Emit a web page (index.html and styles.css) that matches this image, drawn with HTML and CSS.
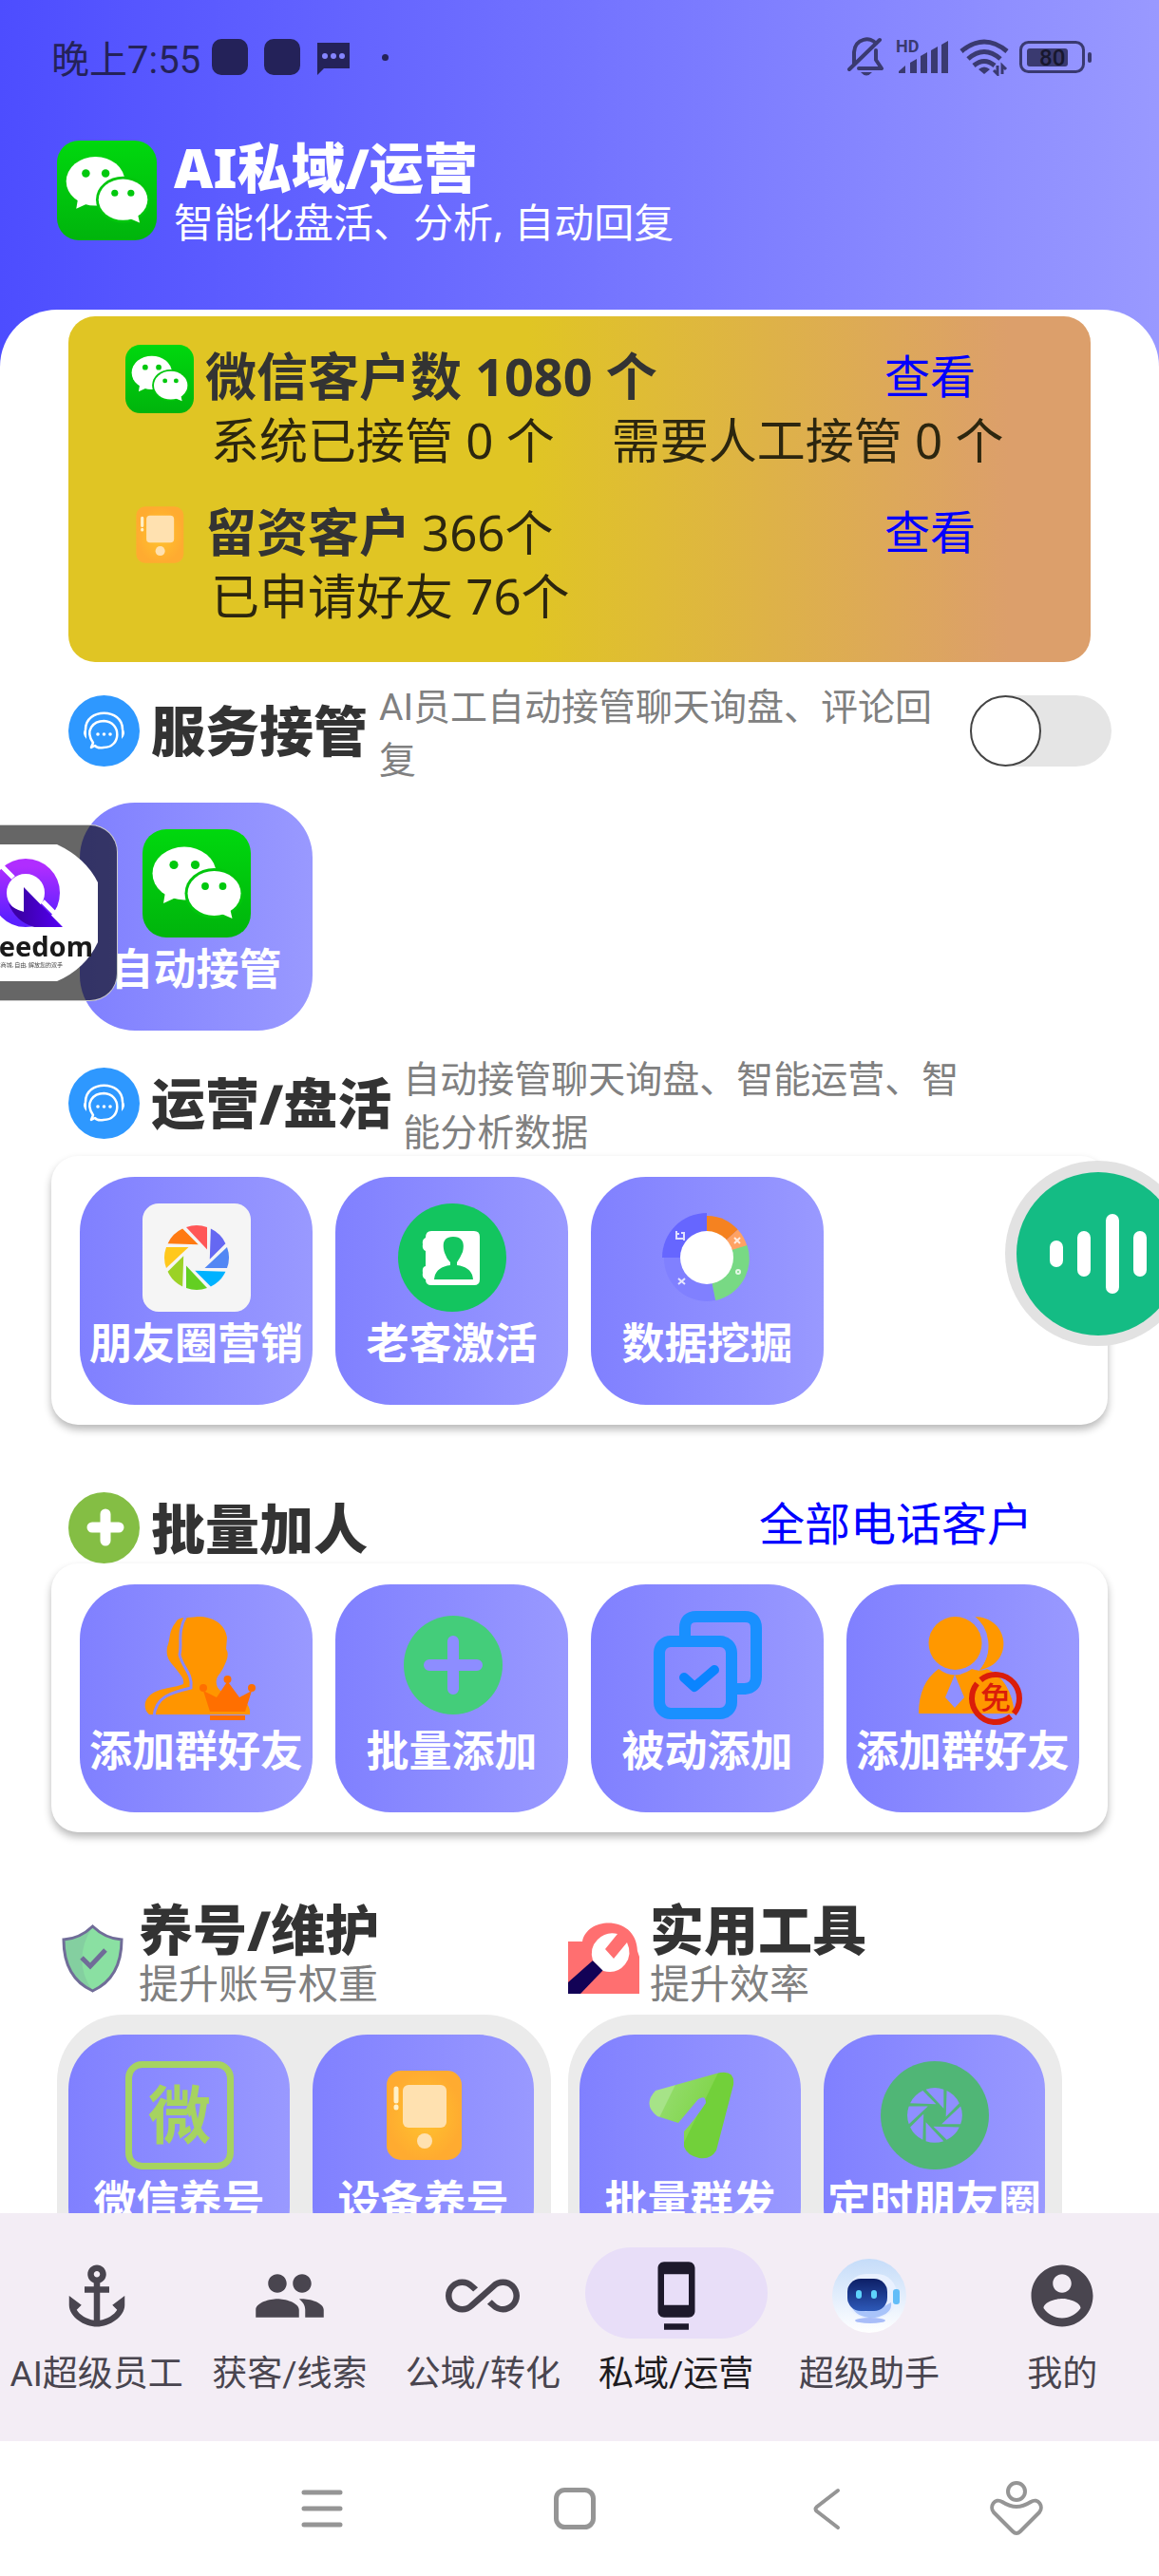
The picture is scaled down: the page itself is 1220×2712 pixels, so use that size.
FILE: index.html
```html
<!DOCTYPE html>
<html lang="zh-CN">
<head>
    <meta charset="UTF-8">
    <meta name="viewport" content="width=device-width, initial-scale=1.0">
    <title>AI私域/运营</title>
    <link rel="stylesheet" href="styles.css">
</head>
<body>

    <!-- Shared icons -->
    <svg class="sprite" aria-hidden="true">
        <defs>
            <linearGradient id="wechatGreen" x1="0" y1="0" x2="0" y2="1">
                <stop offset="0" stop-color="#00d80e"/>
                <stop offset="1" stop-color="#00b40c"/>
            </linearGradient>
            <radialGradient id="phoneOrange">
                <stop offset="0" stop-color="#ffc42e"/>
                <stop offset="1" stop-color="#ffab30"/>
            </radialGradient>
            <linearGradient id="planeGreen" x1="0" y1="0" x2="1" y2="0.5">
                <stop offset="0.3" stop-color="#a6e388"/>
                <stop offset="0.31" stop-color="#90db66"/>
                <stop offset="0.65" stop-color="#84d650"/>
                <stop offset="0.66" stop-color="#72d03a"/>
            </linearGradient>
            <linearGradient id="logoPurple" x1="0" y1="0" x2="0" y2="1">
                <stop offset="0" stop-color="#b02dff"/>
                <stop offset="1" stop-color="#5b20ff"/>
            </linearGradient>
            <linearGradient id="logoBlue" x1="0" y1="0" x2="1" y2="0">
                <stop offset="0.2" stop-color="#3c00a8"/>
                <stop offset="1" stop-color="#5500f5"/>
            </linearGradient>
            <linearGradient id="robotSky" x1="0" y1="0" x2="0" y2="1">
                <stop offset="0" stop-color="#c5dcf9"/>
                <stop offset="1" stop-color="#ffffff"/>
            </linearGradient>
            <linearGradient id="robotFace" x1="0" y1="0" x2="0" y2="1">
                <stop offset="0" stop-color="#0d1f66"/>
                <stop offset="1" stop-color="#2d59b8"/>
            </linearGradient>
        </defs>
        <symbol id="wechat" viewBox="0 0 114 114">
            <rect width="114" height="114" rx="25" fill="url(#wechatGreen)"/>
            <g fill="#fff">
                <ellipse cx="44" cy="46.500" rx="33.500" ry="28"/>
                <path d="M24 66L22 78L35 72Z"/>
                <ellipse cx="75.500" cy="67.500" rx="31" ry="26.500" fill="#00c60d"/>
                <ellipse cx="75.500" cy="67.500" rx="28" ry="23.500"/>
                <path d="M83 89L94.500 94L92 83Z"/>
            </g>
            <g fill="#00c80d">
                <circle cx="33" cy="37.500" r="4.600"/><circle cx="55.500" cy="37.500" r="4.600"/>
                <circle cx="66" cy="60" r="3.900"/><circle cx="84.500" cy="60" r="3.900"/>
            </g>
        </symbol>
        <symbol id="phone" viewBox="0 0 114 114">
            <rect x="18" y="10" width="79" height="94" rx="15" fill="url(#phoneOrange)"/>
            <rect x="35" y="25" width="46" height="45" rx="6" fill="#ffe1b0"/>
            <path d="M28 29V42M28 48V49" stroke="#fff0c8" stroke-width="5" stroke-linecap="round"/>
            <circle cx="58" cy="84" r="8" fill="#ffe1b0"/>
        </symbol>
        <symbol id="headset" viewBox="0 0 75 75">
            <circle cx="37.500" cy="37.500" r="37.500" fill="#2e98ff"/>
            <g fill="none" stroke="#fff" stroke-width="2.500" stroke-linecap="round" stroke-linejoin="round">
                <path d="M18 36C18 13 57 13 57 36"/>
                <path d="M24 55L26 50C17 37 26 27 37.500 27C56 28 56 55 37 55Q30 56 28 53Z"/>
            </g>
            <path d="M19 34Q13 39 19 46ZM56 34Q62 39 56 46Z" fill="#fff"/>
            <g fill="#fff"><circle cx="31" cy="41" r="1.800"/><circle cx="37.500" cy="41" r="1.800"/><circle cx="44" cy="41" r="1.800"/></g>
        </symbol>
        <symbol id="blade" viewBox="0 0 114 114">
            <path d="M46 25Q57 21 68 25V48.500Z"/>
        </symbol>
    </svg>

    <div class="app">

        <!-- Status Bar -->
        <div class="status-bar">
            <span>晚上7:55</span>
            <i class="status-app"></i>
            <i class="status-app"></i>
            <svg class="status-chat" width="38" height="38" viewBox="0 0 38 38"><path d="M2 4H36V31H9L2 38Z" fill="#242259"/><g fill="#8585ff"><circle cx="10" cy="18" r="3"/><circle cx="19" cy="18" r="3"/><circle cx="28" cy="18" r="3"/></g></svg>
            <i class="status-dot"></i>
            <div class="status-right">
                <svg width="40" height="42" viewBox="0 0 40 42" fill="none" stroke="#3a3a70" stroke-width="4">
                    <path d="M7 28V16C8 1 25-1 30 7M30 14V24L36 33H12M2 34L34 3" stroke-linecap="round" stroke-linejoin="round"/><path d="M14 37H26Q20 44 14 37" fill="#3a3a70" stroke="none"/>
                </svg>
                <svg width="56" height="40" viewBox="0 0 56 40" fill="#3a3a70">
                    <text x="0" y="15" class="hd">HD</text>
                    <path d="M3 37V35L10 29V37ZM15 37V26L22 22V37ZM26 37V19L33 15V37ZM37 37V13L44 9V37ZM48 37V7L55 3V37Z"/>
                </svg>
                <svg width="52" height="40" viewBox="0 0 52 40" fill="none" stroke="#3a3a70" stroke-width="5">
                    <path d="M2 14Q26-6 50 14M9 22Q26 7 43 22M15 29Q26 20 37 29"/><path d="M26 38L20 33Q26 28 32 33Z" fill="#3a3a70" stroke="none"/><path d="M40 29V38L36 34M45 38V29L49 33" stroke-width="3"/>
                </svg>
                <svg width="77" height="34" viewBox="0 0 77 34">
                    <rect x="1.500" y="1.500" width="66" height="31" rx="8" fill="none" stroke="#3a3a70" stroke-width="3"/><rect x="8" y="8" width="43" height="19" rx="3" fill="#3a3a70"/><rect x="72" y="12" width="4" height="11" rx="2" fill="#3a3a70"/>
                    <text x="21" y="26" class="battery">80</text>
                </svg>
            </div>
        </div>

        <!-- Header -->
        <header class="header">
            <svg class="header-logo" aria-hidden="true"><use href="#wechat"/></svg>
            <div>
                <h1>AI私域/运营</h1>
                <p>智能化盘活、分析, 自动回复</p>
            </div>
        </header>

        <!-- Content -->
        <main class="sheet">

            <!-- Customer Numbers -->
            <section class="stats">
                <div class="stats-row">
                    <svg class="stats-icon" aria-hidden="true"><use href="#wechat"/></svg>
                    <b>微信客户数 1080 个</b>
                    <a href="#wechat-customers">查看</a>
                </div>
                <div class="stats-detail">
                    <span>系统已接管 0 个</span>
                    <span>需要人工接管 0 个</span>
                </div>
                <div class="stats-row stats-leads">
                    <svg class="stats-icon" aria-hidden="true"><use href="#phone"/></svg>
                    <b>留资客户</b>
                    <span>366个</span>
                    <a href="#lead-customers">查看</a>
                </div>
                <div class="stats-detail">
                    <span>已申请好友 76个</span>
                </div>
            </section>

            <!-- Service Takeover -->
            <section>
                <div class="section-head">
                    <svg class="section-icon" aria-hidden="true"><use href="#headset"/></svg>
                    <h2 id="takeoverTitle">服务接管</h2>
                    <p>AI员工自动接管聊天询盘、评论回复</p>
                    <input type="checkbox" role="switch" class="switch" aria-labelledby="takeoverTitle">
                </div>
                <div class="tiles tiles-plain">
                    <button class="tile">
                        <svg aria-hidden="true"><use href="#wechat"/></svg>
                        <span>自动接管</span>
                    </button>
                </div>
            </section>

            <!-- Operations -->
            <section>
                <div class="section-head head-operate">
                    <svg class="section-icon" aria-hidden="true"><use href="#headset"/></svg>
                    <h2>运营/盘活</h2>
                    <p>自动接管聊天询盘、智能运营、智能分析数据</p>
                </div>
                <div class="tiles tiles-card">
                    <button class="tile">
                        <svg viewBox="0 0 114 114" aria-hidden="true">
                            <rect width="114" height="114" rx="17" fill="#f5f5f5"/>
                            <use href="#blade" fill="#ff5757"/>
                            <use href="#blade" fill="#6568f2" transform="rotate(45 57 57)"/>
                            <use href="#blade" fill="#5287f4" transform="rotate(90 57 57)"/>
                            <use href="#blade" fill="#00b2ff" transform="rotate(135 57 57)"/>
                            <use href="#blade" fill="#63cf22" transform="rotate(180 57 57)"/>
                            <use href="#blade" fill="#9bd226" transform="rotate(225 57 57)"/>
                            <use href="#blade" fill="#ffc81c" transform="rotate(270 57 57)"/>
                            <use href="#blade" fill="#ff7a12" transform="rotate(315 57 57)"/>
                        </svg>
                        <span>朋友圈营销</span>
                    </button>
                    <button class="tile">
                        <svg viewBox="0 0 114 114" aria-hidden="true">
                            <circle cx="57" cy="57" r="57" fill="#13c55f"/>
                            <path d="M35 29H80Q86 29 86 35V80Q86 86 80 86H35Q29 86 29 80Q25 78 26 73Q25 67 29 66V50Q25 48 26 43Q25 38 29 36Q29 29 35 29Z" fill="#fff"/>
                            <path d="M58 35C69 35 70 43 68 51Q65 58 62 62V65Q78 67 79 80H38Q39 67 55 65V62Q51 58 49 52C46 42 48 35 58 35Z" fill="#13c55f"/>
                        </svg>
                        <span>老客激活</span>
                    </button>
                    <button class="tile">
                        <svg viewBox="0 0 114 114" aria-hidden="true">
                            <path d="M56 57V10A47 47 0 0 0 9 57Z" fill="#6666ff"/>
                            <path d="M56 57V13A44 44 0 0 1 88.700 27.600Z" fill="#f58220"/>
                            <path d="M56 57L88.700 27.600A44 44 0 0 1 98.500 45.600Z" fill="#ffa263"/>
                            <path d="M56 57L98.500 44A45 45 0 0 1 65 102Z" fill="#78d984"/>
                            <path d="M56 57L65 102A45 45 0 0 1 11 57Z" fill="#8080ff"/>
                            <circle cx="56" cy="57" r="28" fill="#fff"/>
                            <g fill="none" stroke="#fff" stroke-width="2" opacity="0.8"><path d="M23 32H27M24 29V37H31M29 31H32V39"/><path d="M26 79L33 85M33 79L26 85M85 36L91 42M91 36L85 42"/><circle cx="89" cy="72" r="2"/></g>
                        </svg>
                        <span>数据挖掘</span>
                    </button>
                </div>
            </section>

            <!-- Batch Add -->
            <section>
                <div class="section-head head-batch">
                    <svg class="section-icon" viewBox="0 0 75 75" aria-hidden="true"><circle cx="37.500" cy="37.500" r="37.500" fill="#84be44"/><path d="M39 23V51M25 37H53" stroke="#fff" stroke-width="11" stroke-linecap="round"/></svg>
                    <h2>批量加人</h2>
                    <a href="#phone-customers">全部电话客户</a>
                </div>
                <div class="tiles tiles-card">
                    <button class="tile">
                        <svg viewBox="0 0 114 114" aria-hidden="true">
                            <path d="M35 12C38 5 48 8 58 6C75 6 87 14 89 28L88 40C92 46 88 54 85 60C82 66 79 68 78 72C76 82 84 86 92 89C108 93 114 99 113 109H7C1 104 2 96 5 92C14 80 32 82 43 77C44 70 40 68 36 62C30 54 24 50 26 38C30 28 27 22 35 12Z" fill="#ff9500"/>
                            <path d="M46 5C36 22 42 34 39 46C42 60 53 66 51 81C30 86 14 90 12 111" fill="none" stroke="#8989ff" stroke-width="3"/>
                            <path d="M71 106L64 84L78 91L89.500 74L102 91L115 84L108 106ZM71 110H108V115H71Z" fill="#ff6f00"/>
                            <g fill="#ff6f00"><circle cx="64" cy="81" r="4"/><circle cx="89.500" cy="72" r="4"/><circle cx="115" cy="81" r="4"/></g>
                        </svg>
                        <span>添加群好友</span>
                    </button>
                    <button class="tile">
                        <svg viewBox="0 0 114 114" aria-hidden="true"><circle cx="58" cy="57" r="52" fill="#44cd7a"/><path d="M58 32V82M33 57H83" stroke="#8d8dff" stroke-width="12" stroke-linecap="round"/></svg>
                        <span>批量添加</span>
                    </button>
                    <button class="tile">
                        <svg viewBox="0 0 114 114" fill="none" stroke="#1990ff" stroke-width="12" stroke-linejoin="round" aria-hidden="true">
                            <path d="M33 31V18Q33 6 45 6H96Q108 6 108 18V69Q108 81 96 82H88"/><rect x="6" y="32" width="76" height="76" rx="12"/><path d="M32 70L43 80L64 62" stroke="#0a84ff" stroke-width="10" stroke-linecap="round"/>
                        </svg>
                        <span>被动添加</span>
                    </button>
                    <button class="tile">
                        <svg viewBox="0 0 114 114" aria-hidden="true">
                            <g fill="#ff9800">
                                <path d="M66 6C106 4 112 56 74 62C88 46 86 20 66 6Z"/><circle cx="48.500" cy="34" r="28"/>
                                <path d="M31 61Q48 74 66 61Q74 64 82 61Q107 72 111 108H10Q10 76 31 61Z"/>
                            </g>
                            <path d="M66 5C84 18 88 44 72 62" fill="none" stroke="#9090ff" stroke-width="3"/>
                            <path d="M48 67L58 91L48 102L38 91Z" fill="#8f8fff"/>
                            <circle cx="91" cy="92" r="25" fill="none" stroke="#da1d0a" stroke-width="6" stroke-dasharray="73 5.500" transform="rotate(50 91 92)"/>
                            <text x="91" y="103" class="stamp">免</text>
                        </svg>
                        <span>添加群好友</span>
                    </button>
                </div>
            </section>

            <!-- Maintenance and Tools -->
            <div class="groups">
                <section>
                    <div class="group-head">
                        <svg viewBox="0 0 75 75" aria-hidden="true">
                            <path d="M37.500 4Q24 17 7 18Q7 58 37.500 72Q68 58 68 18Q51 17 37.500 4Z" fill="#8ae0a2"/>
                            <path d="M37.500 4Q24 17 7 18Q7 58 37.500 72Q15 40 37.500 4Z" fill="#84cfa0"/>
                            <path d="M37.500 4Q24 17 7 18Q7 58 37.500 72Q68 58 68 18Q51 17 37.500 4Z" fill="none" stroke="#706c98" stroke-width="3"/>
                            <path d="M26 37L35 46L51 29" fill="none" stroke="#706c98" stroke-width="5"/>
                        </svg>
                        <div>
                            <h2>养号/维护</h2>
                            <p>提升账号权重</p>
                        </div>
                    </div>
                    <div class="tiles tiles-group">
                        <button class="tile">
                            <svg viewBox="0 0 114 114" aria-hidden="true"><rect x="3.500" y="3.500" width="107" height="107" rx="14" fill="none" stroke="#a6d360" stroke-width="7"/><text x="57" y="81" class="wei">微</text></svg>
                            <span>微信养号</span>
                        </button>
                        <button class="tile">
                            <svg aria-hidden="true"><use href="#phone"/></svg>
                            <span>设备养号</span>
                        </button>
                    </div>
                </section>
                <section>
                    <div class="group-head">
                        <svg viewBox="0 0 75 75" aria-hidden="true">
                            <path d="M0 20H15C20-7 72-8 73 30L75 36V75H0Z" fill="#ff6f70"/>
                            <path d="M0 63L26 40L37 50L13 75H0Z" fill="#120256"/>
                            <path d="M52 12L39 28L48 38L62 21Q68 34 60 44Q51 55 37 51L26 40Q22 27 31 18Q40 9 52 12Z" fill="#fff"/>
                        </svg>
                        <div>
                            <h2>实用工具</h2>
                            <p>提升效率</p>
                        </div>
                    </div>
                    <div class="tiles tiles-group">
                        <button class="tile">
                            <svg viewBox="0 0 114 114" aria-hidden="true"><path d="M20 31L84 13Q104 8 102 25L84 94Q78 104 66 102Q53 99 50 90V74Q61 62 73 44Q73 35 65 40L44 65L22 58Q6 46 20 31Z" fill="url(#planeGreen)"/></svg>
                            <span>批量群发</span>
                        </button>
                        <button class="tile">
                            <svg viewBox="0 0 114 114" aria-hidden="true">
                                <circle cx="57" cy="57" r="57" fill="#50b676"/>
                                <g fill="#8f8fff" transform="translate(8.500 8.500) scale(0.850)">
                                    <use href="#blade"/>
                                    <use href="#blade" transform="rotate(45 57 57)"/>
                                    <use href="#blade" transform="rotate(90 57 57)"/>
                                    <use href="#blade" transform="rotate(135 57 57)"/>
                                    <use href="#blade" transform="rotate(180 57 57)"/>
                                    <use href="#blade" transform="rotate(225 57 57)"/>
                                    <use href="#blade" transform="rotate(270 57 57)"/>
                                    <use href="#blade" transform="rotate(315 57 57)"/>
                                </g>
                            </svg>
                            <span>定时朋友圈</span>
                        </button>
                    </div>
                </section>
            </div>
        </main>

        <!-- Bottom Navigation -->
        <nav class="tab-bar">
            <a href="#staff">
                <i><svg viewBox="0 0 24 24"><path d="M17 15l1.550 1.550c-.96 1.690-3.330 3.040-5.550 3.370V11h3V9h-3V7.820C14.160 7.400 15 6.300 15 5c0-1.650-1.350-3-3-3S9 3.350 9 5c0 1.300.84 2.400 2 2.820V9H8v2h3v8.920c-2.220-.33-4.590-1.680-5.550-3.370L7 15l-4-3v3c0 3.880 4.920 7 9 7s9-3.120 9-7v-3l-4 3zM12 4c.55 0 1 .45 1 1s-.45 1-1 1-1-.45-1-1 .45-1 1-1z"/></svg></i>
                <span>AI超级员工</span>
            </a>
            <a href="#leads">
                <i><svg viewBox="0 0 24 24"><path d="M16 11c1.660 0 2.990-1.340 2.990-3S17.660 5 16 5c-1.660 0-3 1.340-3 3s1.340 3 3 3zm-8 0c1.660 0 2.990-1.340 2.990-3S9.660 5 8 5C6.340 5 5 6.340 5 8s1.340 3 3 3zm0 2c-2.330 0-7 1.170-7 3.500V19h14v-2.500c0-2.330-4.670-3.500-7-3.500zm8 0c-.29 0-.62.02-.97.05 1.160.84 1.970 1.970 1.970 3.450V19h6v-2.500c0-2.330-4.670-3.500-7-3.500z"/></svg></i>
                <span>获客/线索</span>
            </a>
            <a href="#public">
                <i><svg viewBox="0 0 24 24"><path d="M18.600 6.620c-1.440 0-2.800.56-3.770 1.530L12 10.660 10.480 12h.01L7.800 14.390c-.64.64-1.490.99-2.400.99-1.870 0-3.390-1.510-3.390-3.380S3.530 8.620 5.400 8.620c.91 0 1.760.35 2.440 1.030l1.130 1 1.510-1.340L9.220 8.200C8.200 7.180 6.840 6.620 5.400 6.620 2.420 6.620 0 9.040 0 12s2.420 5.380 5.400 5.380c1.440 0 2.800-.56 3.770-1.530l2.830-2.500.01.01L13.520 12h-.01l2.690-2.390c.64-.64 1.490-.99 2.400-.99 1.870 0 3.390 1.510 3.390 3.380s-1.520 3.380-3.390 3.380c-.9 0-1.760-.35-2.440-1.030l-1.140-1.010-1.510 1.340 1.270 1.120c1.020 1.010 2.370 1.570 3.820 1.570 2.980 0 5.400-2.410 5.400-5.380s-2.420-5.370-5.400-5.370z"/></svg></i>
                <span>公域/转化</span>
            </a>
            <a href="#private" class="active" aria-current="page">
                <i><svg viewBox="0 0 24 24"><path d="M8 23h8v-2H8v2zM16 1.010L8 1c-1.100 0-2 .9-2 2v14c0 1.100.9 2 2 2h8c1.100 0 2-.9 2-2V3c0-1.100-.9-1.990-2-1.990zM16 15H8V5h8v10z"/></svg></i>
                <span>私域/运营</span>
            </a>
            <a href="#assistant">
                <i><svg viewBox="0 0 78 78">
                    <circle cx="39" cy="39" r="39" fill="url(#robotSky)"/>
                    <ellipse cx="40" cy="65" rx="16" ry="3" fill="#a9bdf8"/>
                    <rect x="15" y="16" width="53" height="46" rx="21" fill="#e9f1ff"/><path d="M20 50Q36 62 62 46Q64 58 45 62Q26 63 20 50Z" fill="#a9c4fa"/>
                    <rect x="64" y="32" width="7" height="16" rx="3" fill="#62bdf8"/>
                    <rect x="16" y="21" width="42" height="34" rx="14" fill="url(#robotFace)"/>
                    <g fill="#5fd4fb"><rect x="25" y="33" width="6" height="9" rx="3"/><rect x="41" y="33" width="6" height="9" rx="3"/></g>
                </svg></i>
                <span>超级助手</span>
            </a>
            <a href="#me">
                <i><svg viewBox="0 0 24 24"><path d="M12 2C6.480 2 2 6.480 2 12s4.480 10 10 10 10-4.480 10-10S17.520 2 12 2zm0 3c1.660 0 3 1.340 3 3s-1.340 3-3 3-3-1.340-3-3 1.340-3 3-3zm0 14.200c-2.500 0-4.710-1.280-6-3.220.03-1.990 4-3.080 6-3.080 1.990 0 5.970 1.090 6 3.080-1.290 1.940-3.500 3.220-6 3.220z"/></svg></i>
                <span>我的</span>
            </a>
        </nav>

        <!-- System Keys -->
        <div class="system-bar">
            <button aria-label="菜单"><svg viewBox="0 0 60 60"><path d="M11 13H49M11 30H49M11 47H49" stroke-width="5"/></svg></button>
            <button aria-label="主页"><svg viewBox="0 0 60 60"><rect x="10.500" y="10.500" width="39" height="39" rx="9" stroke-width="5"/></svg></button>
            <button aria-label="返回"><svg viewBox="0 0 60 60"><path d="M42 11L20 28Q17 31 20 33L42 50" stroke-width="4"/></svg></button>
            <button aria-label="无障碍"><svg viewBox="0 0 60 60"><circle cx="30" cy="12" r="9" stroke-width="4"/><path d="M30 28Q37 28 45 23C53 18 59 28 54 34L34 54Q30 58 26 54L6 34C1 28 7 18 15 23Q23 28 30 28Z" stroke-width="4"/></svg></button>
        </div>

        <!-- Floating Buttons -->
        <button class="float-logo" aria-label="Freedom">
            <svg width="123" height="184" viewBox="0 0 123 184" aria-hidden="true">
                <path d="M-42 20H60Q90 34 103 60V123Q90 151 60 164H-42Z" fill="#fff"/>
                <circle cx="27" cy="71" r="28" fill="none" stroke="url(#logoPurple)" stroke-width="16"/>
                <path d="M25 65V91Q14 88 9 82Q16 101 36 107H66Z" fill="url(#logoBlue)"/>
                <path d="M0 41L14 55M45 80L59 94" stroke="#fff" stroke-width="5"/>
                <text x="98" y="138" class="logo-name">Freedom</text>
                <text x="66" y="149" class="logo-note">基本商城, 自由, 解放您的双手</text>
            </svg>
        </button>
        <button class="float-voice" aria-label="语音助手">
            <svg width="195" height="195" viewBox="0 0 195 195"><circle cx="98" cy="98" r="86" fill="#14bc84"/><path d="M54 91V105M83 81V115M113 63V133M142 81V115M170 91V105" stroke="#fff" stroke-width="14" stroke-linecap="round"/></svg>
        </button>
    </div>

</body>
</html>
```
FILE: styles.css
```css
* {
    box-sizing: border-box;
}

body {
    margin: 0;
    font-family: Roboto, "Noto Sans CJK SC", sans-serif;
    background: white;
}

h1, h2, p {
    margin: 0;
}

h1, h2 {
    font-family: "Noto Sans", "Noto Sans CJK SC", sans-serif;
    font-size: 57px;
    font-weight: 900;
    white-space: nowrap;
}

a {
    text-decoration: none;
    color: #0000ff;
}

button {
    border: none;
    padding: 0;
    background: none;
    font-family: inherit;
    cursor: pointer;
}

svg {
    display: block;
    flex-shrink: 0;
}

.sprite {
    position: absolute;
    width: 0;
    height: 0;
}

.app {
    position: relative;
    height: 100vh;
    display: flex;
    flex-direction: column;
    overflow: hidden;
    background: linear-gradient(to right, #4d4dff, #9999ff);
}

/* Status Bar */
.status-bar {
    display: flex;
    align-items: center;
    height: 120px;
    padding: 0 70px 0 54px;
    font-size: 40px;
    color: #242259;
    flex-shrink: 0;
}

.status-app {
    width: 38px;
    height: 38px;
    margin-left: 12px;
    border-radius: 10px;
    background: #242259;
}

.status-app + .status-app {
    margin-left: 17px;
}

.status-chat {
    margin-left: 16px;
}

.status-dot {
    width: 7px;
    height: 7px;
    margin-left: 32px;
    border-radius: 50%;
    background: #242259;
}

.status-right {
    display: flex;
    align-items: center;
    gap: 11px;
    margin-left: auto;
}

.hd {
    font-size: 18px;
    font-weight: bold;
}

.battery {
    font-size: 24px;
    font-weight: 500;
    fill: #17172e;
}

/* Header */
.header {
    display: flex;
    gap: 18px;
    padding: 28px 60px 62px;
    color: white;
    flex-shrink: 0;
}

.header-logo {
    width: 105px;
    height: 105px;
}

.header h1 {
    line-height: 56px;
}

.header p {
    font-family: "Noto Sans", "Noto Sans CJK SC", sans-serif;
    font-size: 42px;
    line-height: 60px;
}

/* Content */
.sheet {
    flex: 1;
    min-height: 0;
    overflow-y: auto;
    scrollbar-width: none;
    border-radius: 60px 60px 0 0;
    background: white;
}

/* Customer Numbers */
.stats {
    margin: 7px 72px 16px;
    padding: 30px 60px 42px;
    border-radius: 28px;
    background: linear-gradient(to right, #e0c524 45%, #dc9f6b 92%);
    font-family: "Noto Sans", "Noto Sans CJK SC", sans-serif;
    font-size: 51px;
    color: #2c260f;
}

.stats-row {
    display: flex;
    height: 72px;
    gap: 12px;
    line-height: 66px;
}

.stats-row b {
    font-size: 54px;
    font-weight: 700;
    color: #333;
}

.stats-row a {
    margin: 0 61px 0 auto;
    font-size: 48px;
}

.stats-leads {
    margin-top: 36px;
}

.stats-icon {
    width: 72px;
    height: 72px;
}

.stats-detail {
    display: flex;
    gap: 60px;
    padding-left: 90px;
    line-height: 56px;
    white-space: nowrap;
}

/* Section Titles */
.section-head {
    display: flex;
    align-items: center;
    gap: 12px;
    padding: 0 50px 0 72px;
}

.section-icon {
    width: 75px;
    height: 75px;
}

h2 {
    line-height: 66px;
    color: #333;
}

.section-head p {
    max-width: 600px;
    padding-top: 4px;
    margin-bottom: -4px;
    font-size: 39px;
    line-height: 56px;
    color: #808080;
}

.section-head a {
    margin: 0 83px 0 auto;
    padding-bottom: 6px;
    font-size: 48px;
    line-height: 66px;
}

.head-operate {
    margin-top: 20px;
}

.head-batch {
    margin-top: 71px;
}

.switch {
    appearance: none;
    width: 149px;
    height: 75px;
    margin: 0 0 0 auto;
    border-radius: 38px;
    background: #e5e5e5;
    flex-shrink: 0;
    cursor: pointer;
}

.switch::before {
    content: "";
    display: block;
    width: 75px;
    height: 75px;
    border: 2px solid #444;
    border-radius: 50%;
    background: white;
    box-sizing: border-box;
}

.switch:checked {
    background: #8080ff;
}

.switch:checked::before {
    margin-left: auto;
}

/* Tiles */
.tiles {
    display: grid;
    grid-template-columns: repeat(4, 1fr);
    gap: 24px;
}

.tiles-plain {
    padding: 20px 84px 0;
}

.tiles-card {
    margin: 0 54px;
    padding: 22px 30px 21px;
    border-radius: 28px;
    background: white;
    box-shadow: 0 5px 9px rgba(0, 0, 0, 0.28);
}

.tiles-group {
    grid-template-columns: repeat(2, 1fr);
    margin-top: 5px;
    padding: 21px 18px 21px 12px;
    border-radius: 70px;
    background: #ebebeb;
}

.tile {
    display: flex;
    flex-direction: column;
    align-items: center;
    height: 240px;
    padding-top: 28px;
    border-radius: 58px;
    background: linear-gradient(to right, #8080ff, #9999ff);
    color: white;
    font-size: 45px;
    font-weight: 700;
    line-height: 70px;
    white-space: nowrap;
}

.tile svg {
    width: 114px;
    height: 114px;
    overflow: visible;
}

.stamp {
    font-size: 32px;
    font-weight: 500;
    text-anchor: middle;
    fill: #da1d0a;
}

.wei {
    font-size: 66px;
    font-weight: 700;
    text-anchor: middle;
    fill: #a6d360;
}

/* Maintenance and Tools */
.groups {
    display: grid;
    grid-template-columns: 1fr 1fr;
    gap: 18px;
    padding: 69px 102px 40px 60px;
}

.group-head {
    display: flex;
    align-items: flex-end;
    gap: 11px;
}

.group-head svg {
    width: 75px;
    height: 75px;
    margin-bottom: 17px;
}

.group-head p {
    font-size: 42px;
    line-height: 52px;
    color: #808080;
}

/* Bottom Navigation */
.tab-bar {
    display: grid;
    grid-template-columns: repeat(6, 1fr);
    padding: 36px 0 46px;
    background: #f3edf5;
    flex-shrink: 0;
}

.tab-bar a {
    display: flex;
    flex-direction: column;
    align-items: center;
    gap: 14px;
    font-size: 37px;
    line-height: 48px;
    color: #49454f;
    fill: #49454f;
    white-space: nowrap;
}

.tab-bar i {
    display: flex;
    align-items: center;
    justify-content: center;
    width: 192px;
    height: 96px;
    padding-top: 6px;
    border-radius: 48px;
}

.tab-bar svg {
    width: 78px;
    height: 78px;
}

.tab-bar .active {
    color: #1d1b20;
    fill: #1d192b;
}

.tab-bar .active i {
    background: #e8def8;
}

/* System Keys */
.system-bar {
    display: grid;
    grid-template-columns: repeat(3, 2fr) 1fr;
    align-items: center;
    height: 142px;
    padding: 0 84px 0 206px;
    background: white;
    flex-shrink: 0;
}

.system-bar svg {
    width: 60px;
    height: 60px;
    margin: 0 auto;
    fill: none;
    stroke: #959595;
    stroke-linecap: round;
    stroke-linejoin: round;
}

/* Floating Buttons */
.float-logo {
    position: absolute;
    left: 0;
    top: 868px;
    border: 1px solid #cccccc;
    border-left: none;
    border-radius: 0 29px 29px 0;
    background: rgba(0, 0, 0, 0.6);
    overflow: hidden;
}

.logo-name {
    font-family: "Noto Sans", sans-serif;
    font-size: 29px;
    font-weight: 700;
    text-anchor: end;
    fill: #1a1a1a;
}

.logo-note {
    font-size: 6px;
    text-anchor: end;
    fill: #444;
}

.float-voice {
    position: absolute;
    right: -33px;
    top: 1222px;
    border-radius: 50%;
    background: #e2e2e2;
}
```
